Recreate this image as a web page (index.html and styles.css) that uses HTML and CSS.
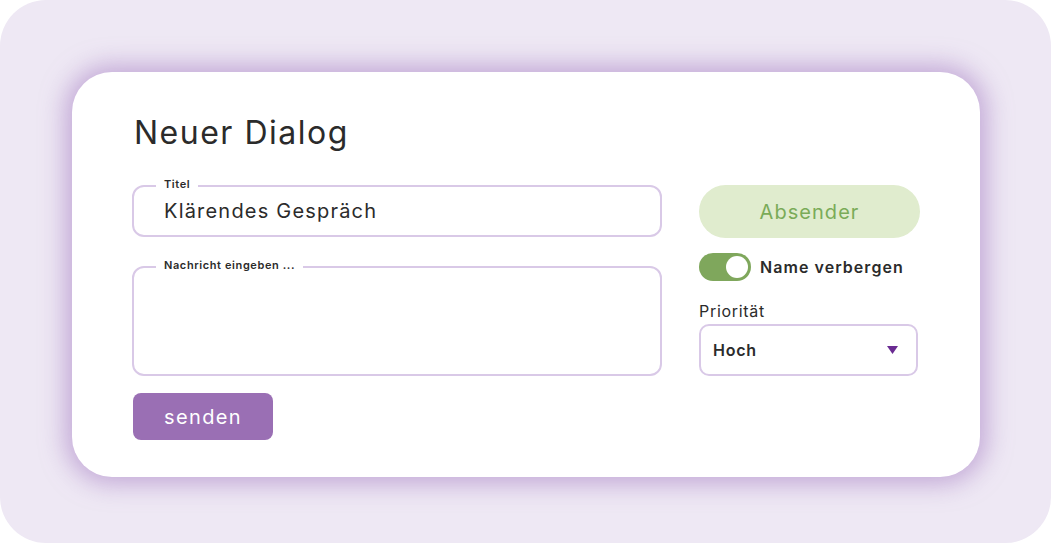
FILE: index.html
```html
<!DOCTYPE html>
<html lang="de">
<head>
<meta charset="utf-8">
<title>Neuer Dialog</title>
<link rel="stylesheet" href="styles.css">
</head>
<body>
<div class="backdrop">
  <div class="card">
    <h1 class="title">Neuer Dialog</h1>
    <div class="grid">
      <div class="left">
        <div class="field field-input">
          <span class="field-label">Titel</span>
          <span class="field-value">Klärendes Gespräch</span>
        </div>
        <div class="field field-area">
          <span class="field-label">Nachricht eingeben ...</span>
        </div>
        <button class="btn-send">senden</button>
      </div>
      <div class="right">
        <button class="btn-sender">Absender</button>
        <div class="toggle-row">
          <span class="toggle"><span class="knob"></span></span>
          <span class="toggle-label">Name verbergen</span>
        </div>
        <div class="prio">
          <span class="prio-label">Priorität</span>
          <div class="select">
            <span class="select-value">Hoch</span>
            <svg class="caret" width="11" height="8" viewBox="0 0 11 8"><path d="M0 0 H11 L5.5 8 Z" fill="#6a2b92"/></svg>
          </div>
        </div>
      </div>
    </div>
  </div>
</div>
</body>
</html>
```

FILE: styles.css
```css
* { box-sizing: border-box; }
html, body { margin: 0; padding: 0; background: #ffffff; }
body {
  font-family: "Inter", "Noto Sans", "DejaVu Sans", sans-serif;
  color: #2b2b2b;
}
.backdrop {
  width: 1051px;
  height: 543px;
  background: #eee8f4;
  border-radius: 46px;
  padding: 72px 71px 66px 72px;
}
.card {
  width: 908px;
  height: 405px;
  background: #ffffff;
  border-radius: 40px;
  box-shadow: 0 0 24px 7px rgba(160, 118, 192, 0.55);
  padding: 36px 60px 0 60px;
}
.title {
  margin: 0 0 0 2px;
  font-size: 32px;
  font-weight: 400;
  line-height: 50px;
  letter-spacing: 1.5px;
  color: #2b2b2b;
}
.grid {
  display: grid;
  grid-template-columns: 530px 221px;
  column-gap: 37px;
  margin-top: 27px;
}
.left { display: flex; flex-direction: column; }
.field {
  position: relative;
  border: 2px solid #d9c9e7;
  border-radius: 12px;
  display: flex;
  align-items: center;
  padding: 0 30px;
}
.field-input { height: 52px; }
.field-area { height: 110px; margin-top: 29px; }
.field-label {
  position: absolute;
  top: -10px;
  left: 22px;
  background: #ffffff;
  padding: 0 8px;
  font-size: 11px;
  line-height: 14px;
  font-weight: 600;
  letter-spacing: 0.6px;
  color: #2b2b2b;
}
.field-value {
  font-size: 20px;
  letter-spacing: 1.2px;
  color: #2b2b2b;
}
.btn-send {
  margin-top: 17px;
  margin-left: 1px;
  width: 140px;
  height: 47px;
  border: 0;
  border-radius: 8px;
  background: #9a6fb4;
  color: #ffffff;
  font-family: inherit;
  font-size: 20px;
  letter-spacing: 1.4px;
  padding: 0;
}
.right { display: flex; flex-direction: column; }
.btn-sender {
  height: 53px;
  width: 221px;
  border: 0;
  border-radius: 27px;
  background: #e0ecce;
  color: #7aab58;
  font-family: inherit;
  font-size: 20px;
  letter-spacing: 1.05px;
  padding: 0;
}
.toggle-row {
  display: flex;
  align-items: center;
  gap: 9px;
  margin-top: 15px;
}
.toggle {
  width: 52px;
  height: 28px;
  border-radius: 14px;
  background: #7fa75c;
  display: flex;
  align-items: center;
  justify-content: flex-end;
  padding: 0 3px;
}
.knob {
  width: 22px;
  height: 22px;
  border-radius: 50%;
  background: #ffffff;
}
.toggle-label {
  font-size: 16px;
  font-weight: 600;
  letter-spacing: 1.05px;
  color: #2b2b2b;
}
.prio {
  display: flex;
  flex-direction: column;
  margin-top: 18px;
}
.prio-label {
  font-size: 16px;
  line-height: 24px;
  letter-spacing: 0.7px;
  color: #2b2b2b;
}
.select {
  width: 219px;
  height: 52px;
  margin-top: 1px;
  border: 2px solid #d9c9e7;
  border-radius: 10px;
  display: flex;
  align-items: center;
  justify-content: space-between;
  padding: 0 18px 0 12px;
}
.select-value {
  font-size: 16px;
  font-weight: 600;
  letter-spacing: 0.75px;
  color: #2b2b2b;
}
.caret { display: block; }
```
